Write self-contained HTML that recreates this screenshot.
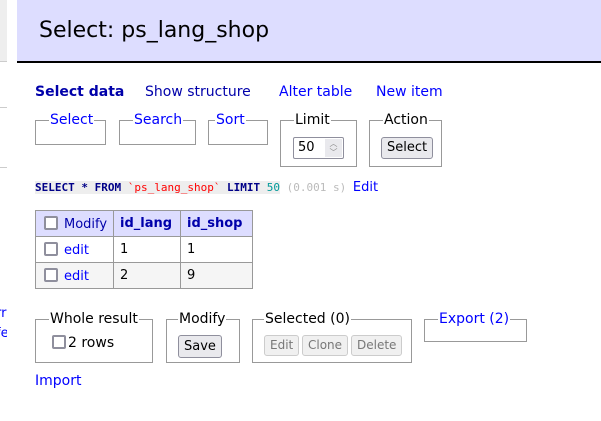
<!DOCTYPE html>
<html><head><style>
body{margin:0;width:601px;height:421px;background:#fff;font-family:"DejaVu Sans","Liberation Sans",sans-serif;font-size:13px;color:#000;position:relative;overflow:hidden}
a{color:#00f;text-decoration:none}
.abs{position:absolute}
fieldset{position:absolute;margin:0;padding:0;border:1px solid #999;box-sizing:border-box}
legend{padding:0 1px;margin-left:13px;font-size:14px;line-height:14px}
.btn{display:inline-block;position:absolute;border:1px solid #8f8f9d;border-radius:3px;background:#e9e9ed;font-size:12px;line-height:18px;padding:0 5px;box-sizing:border-box;height:21px}
.dis{border-color:#ccc;color:#777;background:#f0f0f0}
.cb{display:inline-block;width:10px;height:10px;border:2px solid #8f8f9d;border-radius:2px;background:#fff;vertical-align:-2px;margin-right:6px}
table{position:absolute;border-collapse:collapse;font-size:13px;table-layout:fixed}
td,th{border:1px solid #999;padding:0 6px;height:26px;box-sizing:border-box;text-align:left;white-space:nowrap}
th{background:#ddf;color:#00a;font-weight:bold}
</style></head><body>
<div class="abs" style="left:0;top:0;width:7px;height:61px;background:#eee;border-bottom:1px solid #ccc"></div>
<div class="abs" style="left:0;top:107px;width:7px;height:1px;background:#ccc"></div>
<div class="abs" style="left:0;top:167px;width:7px;height:1px;background:#ccc"></div>
<div class="abs" style="left:-4px;top:304px;color:#00f;font-size:13px;line-height:20px;width:11px;overflow:hidden">rr<br>fe</div>
<div class="abs" style="left:17px;top:0;width:584px;height:61px;background:#ddf;border-bottom:2px solid #000"></div>
<div class="abs" style="left:39px;top:16px;font-size:22px;line-height:30px">Select: ps_lang_shop</div>
<div class="abs" style="left:35px;top:83px;font-size:14px;line-height:18px;white-space:nowrap"><b style="color:#00a">Select data</b><a style="position:absolute;left:110px;color:#00a">Show structure</a><a style="position:absolute;left:244px">Alter table</a><a style="position:absolute;left:341px">New item</a></div>
<fieldset style="left:35px;top:113px;width:71px;height:32px"><legend><a>Select</a></legend></fieldset>
<fieldset style="left:119px;top:113px;width:77px;height:32px"><legend><a>Search</a></legend></fieldset>
<fieldset style="left:208px;top:113px;width:60px;height:32px"><legend style="margin-left:6px"><a>Sort</a></legend></fieldset>
<fieldset style="left:280px;top:113px;width:77px;height:54px"><legend>Limit</legend></fieldset>
<div class="abs" style="left:293px;top:137px;width:51px;height:22px;border:1px solid #8f8f9d;border-radius:2px;box-sizing:border-box;font-size:13px;line-height:20px;padding-left:4px">50<div class="abs" style="right:1px;top:1px;width:17px;height:18px;background:#e9e9ed;color:#888;font-size:8px;line-height:9px;text-align:center">︿<br>﹀</div></div>
<fieldset style="left:369px;top:113px;width:73px;height:54px"><legend>Action</legend></fieldset>
<div class="btn" style="left:381px;top:137px;height:22px;line-height:20px;font-size:13px">Select</div>
<div class="abs" style="left:35px;top:180px;font-family:'DejaVu Sans Mono','Liberation Mono',monospace;font-size:11px;line-height:16px;white-space:nowrap"><span style="background:#eee;color:#008;font-weight:bold">SELECT * FROM <span style="color:red;font-weight:normal">`ps_lang_shop`</span> LIMIT <span style="color:#099;font-weight:normal">50</span></span> <span style="color:#bbb">(0.001 s)</span> <a style="font-family:'DejaVu Sans',sans-serif;font-size:13px">Edit</a></div>
<table style="left:35px;top:210px;width:217px">
<colgroup><col style="width:78px"><col style="width:67px"><col style="width:72px"></colgroup>
<tr><th style="font-weight:normal;padding-left:8px;color:#00a"><span class="cb"></span><a style="color:#00a">Modify</a></th><th>id_lang</th><th>id_shop</th></tr>
<tr><td style="padding-left:8px"><span class="cb"></span><a>edit</a></td><td>1</td><td>1</td></tr>
<tr style="background:#f5f5f5"><td style="padding-left:8px"><span class="cb"></span><a>edit</a></td><td>2</td><td>9</td></tr>
</table>
<fieldset style="left:35px;top:312px;width:118px;height:51px"><legend>Whole result</legend></fieldset>
<div class="abs" style="left:52px;top:335px;font-size:14px"><span class="cb" style="margin-right:2px"></span>2 rows</div>
<fieldset style="left:166px;top:312px;width:74px;height:51px"><legend style="margin-left:11px">Modify</legend></fieldset>
<div class="btn" style="left:178px;top:335px;height:23px;line-height:21px;font-size:13px">Save</div>
<fieldset style="left:252px;top:312px;width:160px;height:51px"><legend style="margin-left:11px">Selected (0)</legend></fieldset>
<div class="btn dis" style="left:264px;top:335px">Edit</div>
<div class="btn dis" style="left:302px;top:335px">Clone</div>
<div class="btn dis" style="left:351px;top:335px">Delete</div>
<fieldset style="left:424px;top:312px;width:103px;height:30px"><legend style="margin-left:13px"><a>Export (2)</a></legend></fieldset>
<a class="abs" style="left:35px;top:373px;font-size:14px">Import</a>
</body></html>
